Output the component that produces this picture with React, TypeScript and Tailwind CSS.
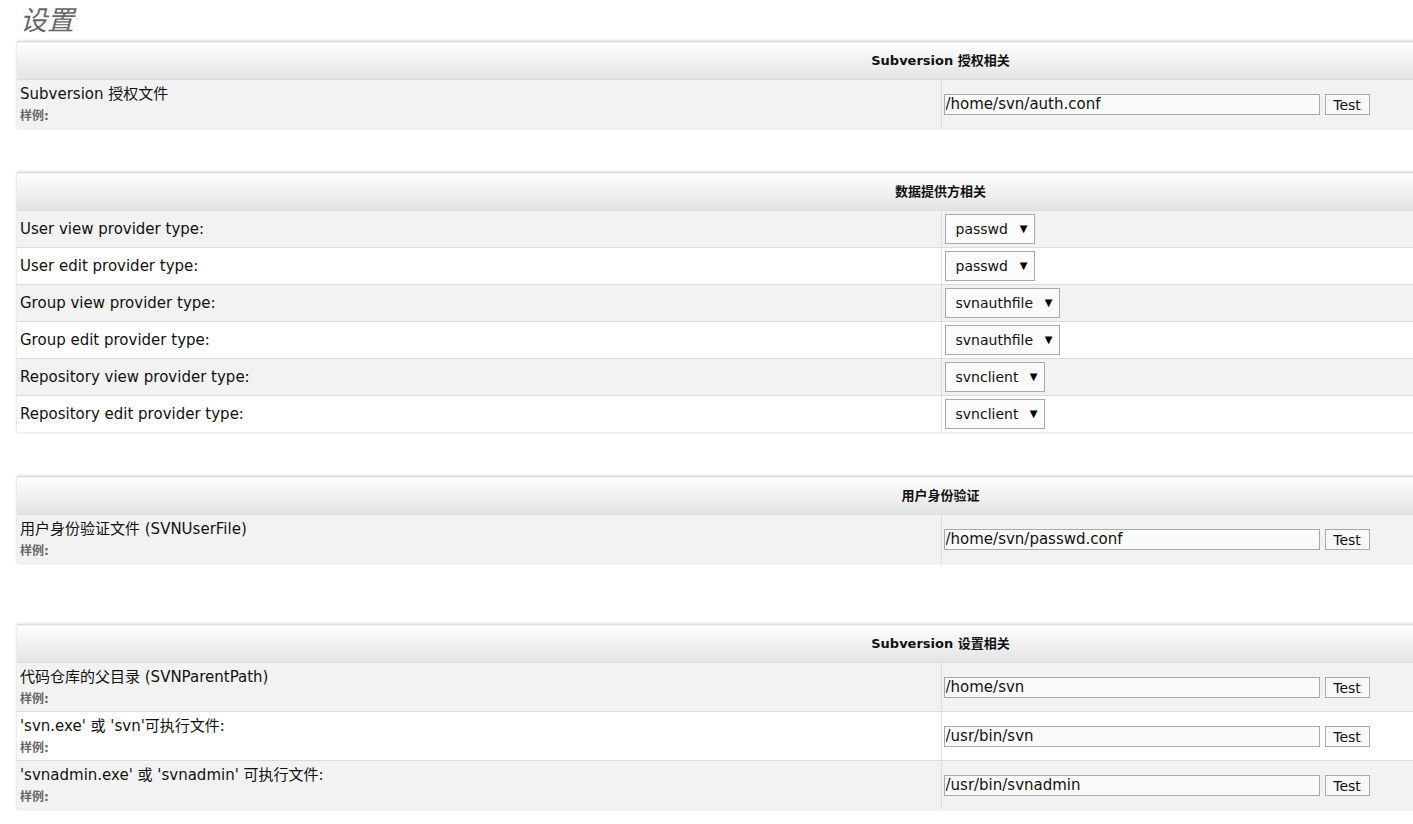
import React from "react"

// Types
type Row =
  | { kind: "path"; label: string; value: string }
  | { kind: "select"; label: string; value: string }

interface Section {
  title: string
  rows: Row[]
  gapAfter: string
}

const sections: Section[] = [
  {
    title: "Subversion 授权相关",
    rows: [{ kind: "path", label: "Subversion 授权文件", value: "/home/svn/auth.conf" }],
    gapAfter: "mb-[44px]",
  },
  {
    title: "数据提供方相关",
    rows: [
      { kind: "select", label: "User view provider type:", value: "passwd" },
      { kind: "select", label: "User edit provider type:", value: "passwd" },
      { kind: "select", label: "Group view provider type:", value: "svnauthfile" },
      { kind: "select", label: "Group edit provider type:", value: "svnauthfile" },
      { kind: "select", label: "Repository view provider type:", value: "svnclient" },
      { kind: "select", label: "Repository edit provider type:", value: "svnclient" },
    ],
    gapAfter: "mb-[44px]",
  },
  {
    title: "用户身份验证",
    rows: [{ kind: "path", label: "用户身份验证文件 (SVNUserFile)", value: "/home/svn/passwd.conf" }],
    gapAfter: "mb-[61px]",
  },
  {
    title: "Subversion 设置相关",
    rows: [
      { kind: "path", label: "代码仓库的父目录 (SVNParentPath)", value: "/home/svn" },
      { kind: "path", label: "'svn.exe' 或 'svn'可执行文件:", value: "/usr/bin/svn" },
      { kind: "path", label: "'svnadmin.exe' 或 'svnadmin' 可执行文件:", value: "/usr/bin/svnadmin" },
    ],
    gapAfter: "mb-0",
  },
]

const font = "font-['DejaVu_Sans','Noto_Sans_CJK_SC',sans-serif]"

function PathCell({ value }: { value: string }) {
  return (
    <div className="flex items-center pl-[2px] pt-[1px]">
      <input
        type="text"
        defaultValue={value}
        className={`w-[376px] h-[21px] border border-[#a9a9a9] bg-[#fafafa] px-[1px] text-[15px] text-[#111] outline-none ${font}`}
      />
      <button
        className={`ml-[5px] w-[45px] h-[21px] border border-[#a9a9a9] bg-[#f9f9f9] text-[14px] text-[#111] leading-none ${font}`}
      >
        Test
      </button>
    </div>
  )
}

function SelectCell({ value }: { value: string }) {
  return (
    <div className="pl-[3px] flex items-center">
      <div className="relative inline-block">
        <select
          defaultValue={value}
          className={`appearance-none h-[30px] border border-[#a9a9a9] bg-[#fbfbfb] pl-[10px] pr-[25px] text-[14px] text-[#111] outline-none ${font}`}
        >
          <option value={value}>{value}</option>
        </select>
        <span className="pointer-events-none absolute right-[7px] top-[7px] text-[10px] text-black">▼</span>
      </div>
    </div>
  )
}

export default function App() {
  return (
    <div className={`w-[1413px] h-[824px] overflow-hidden bg-white ${font}`}>
      <h1 className="pl-[20px] pt-[3px] h-[41px] text-[27px] leading-[32px] italic text-[#666] font-['Noto_Sans_CJK_SC',sans-serif]">
        设置
      </h1>

      <div className="pl-[17px]">
        {sections.map((section) => (
          <table
            key={section.title}
            className={`w-[1847px] border-collapse shadow-[0_0_3px_rgba(0,0,0,0.2)] ${section.gapAfter}`}
          >
            <thead>
              <tr>
                <th
                  colSpan={2}
                  className="h-[38px] p-0 border-t border-[#dcdcdc] bg-gradient-to-b from-[#fefefe] to-[#e3e3e3] text-center text-[13px] font-bold text-[#111]"
                >
                  {section.title}
                </th>
              </tr>
            </thead>
            <tbody>
              {section.rows.map((row, i) => (
                <tr
                  key={row.label}
                  className={`${i % 2 === 0 ? "bg-[#f2f2f2]" : "bg-white"} border-t border-[#dcdcdc]`}
                >
                  <td className="w-[924px] p-0 border-r border-[#dcdcdc] pl-[3px] align-middle">
                    {row.kind === "path" ? (
                      <div className="h-[48px] pt-[4px]">
                        <div className="text-[15px] leading-[20px] text-[#111]">{row.label}</div>
                        <div className="mt-[5px] text-[12px] leading-[14px] font-bold text-[#666]">样例:</div>
                      </div>
                    ) : (
                      <div className="h-[36px] flex items-center text-[15px] text-[#111]">{row.label}</div>
                    )}
                  </td>
                  <td className="p-0 align-middle">
                    {row.kind === "path" ? <PathCell value={row.value} /> : <SelectCell value={row.value} />}
                  </td>
                </tr>
              ))}
            </tbody>
          </table>
        ))}
      </div>
    </div>
  )
}
